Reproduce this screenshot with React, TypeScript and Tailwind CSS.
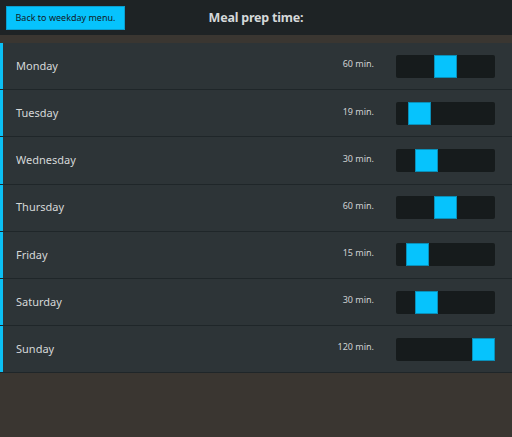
const days: { name: string; minutes: number }[] = [
  { name: "Monday", minutes: 60 },
  { name: "Tuesday", minutes: 19 },
  { name: "Wednesday", minutes: 30 },
  { name: "Thursday", minutes: 60 },
  { name: "Friday", minutes: 15 },
  { name: "Saturday", minutes: 30 },
  { name: "Sunday", minutes: 120 },
];

const MAX = 120;
const TRACK_W = 99;
const THUMB_W = 23;

function Slider({ value }: { value: number }) {
  const left = Math.round((value / MAX) * (TRACK_W - THUMB_W));
  return (
    <div className="relative h-[23px] w-[99px] rounded-[2px] bg-[#161b1c]">
      <div
        className="absolute top-0 h-[23px] w-[23px] border border-[#0a8fb8] bg-[#06c3fd]"
        style={{ left }}
      />
    </div>
  );
}

export default function App() {
  return (
    <div
      className="flex h-[437px] w-[512px] flex-col bg-[#3a3631] text-[#d8dadb]"
      style={{ fontFamily: '"Noto Sans", "Open Sans", sans-serif' }}
    >
      <header className="relative flex h-[35px] items-center bg-[#1e2325] px-[6px]">
        <button
          type="button"
          className="h-[24px] w-[119px] border border-[#0a9fd0] bg-[#06c3fd] text-[9px] text-[#112027]"
        >
          Back to weekday menu.
        </button>
        <div className="absolute inset-0 flex items-center justify-center pt-[1px] text-[12.5px] font-bold tracking-[-0.2px] text-[#d5d8d9]">
          Meal prep time:
        </div>
      </header>
      <div className="h-[8px]" />
      <div className="flex flex-col">
        {days.map((d) => (
          <div
            key={d.name}
            className="flex h-[47.2px] items-center border-b border-[#1f2629] bg-[#2d3437]"
          >
            <div className="h-full w-[3px] bg-[#0bc0f5]" />
            <div className="flex-1 pl-[13px] text-[11px] text-[#d5d8d9]">{d.name}</div>
            <div className="mb-[4px] pr-[22px] text-[9px] text-[#cfd2d3]">{d.minutes} min.</div>
            <div className="pr-[17px]">
              <Slider value={d.minutes} />
            </div>
          </div>
        ))}
      </div>
    </div>
  );
}
